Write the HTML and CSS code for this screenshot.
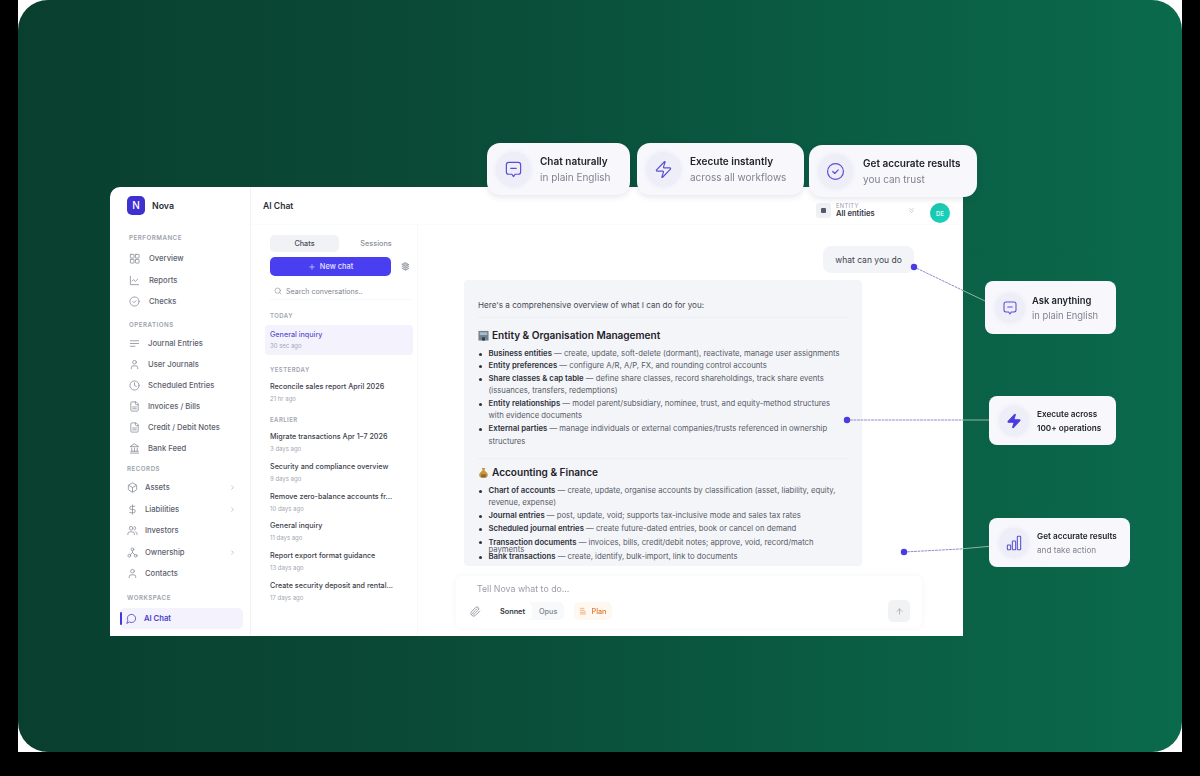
FILE: index.html
```html
<!DOCTYPE html>
<html lang="en">
<head>
<meta charset="utf-8">
<title>Nova AI Chat</title>
<link rel="stylesheet" href="styles.css">
</head>
<body>
<svg class="sprite" aria-hidden="true">
  <symbol id="i-grid" viewBox="0 0 24 24"><rect x="3" y="3" width="8" height="8" rx="1"/><rect x="14" y="3" width="8" height="8" rx="1"/><rect x="3" y="14" width="8" height="8" rx="1"/><rect x="14" y="14" width="8" height="8" rx="1"/></symbol>
  <symbol id="i-chart" viewBox="0 0 24 24"><path d="M3 3v18h18"/><path d="m19 9-5 5-4-4-3 3"/></symbol>
  <symbol id="i-check" viewBox="0 0 24 24"><circle cx="12" cy="12" r="10"/><path d="m8.500 12 2.500 2.500 4.500-4.500"/></symbol>
  <symbol id="i-lines" viewBox="0 0 24 24"><path d="M21 6H3"/><path d="M21 12H3"/><path d="M13 18H3"/></symbol>
  <symbol id="i-user" viewBox="0 0 24 24"><path d="M19 21v-2a4 4 0 0 0-4-4H9a4 4 0 0 0-4 4v2"/><circle cx="12" cy="7" r="4"/></symbol>
  <symbol id="i-clock" viewBox="0 0 24 24"><circle cx="12" cy="12" r="10"/><path d="M12 6v6l4 2"/></symbol>
  <symbol id="i-file" viewBox="0 0 24 24"><path d="M15 2H6a2 2 0 0 0-2 2v16a2 2 0 0 0 2 2h12a2 2 0 0 0 2-2V7Z"/><path d="M14 2v4a2 2 0 0 0 2 2h4"/><path d="M16 13H8"/><path d="M16 17H8"/></symbol>
  <symbol id="i-bank" viewBox="0 0 24 24"><path d="M3 22h18"/><path d="M6 18v-7"/><path d="M12 18v-7"/><path d="M18 18v-7"/><path d="M12 2l9 6H3z"/><path d="M4 18h16"/></symbol>
  <symbol id="i-box" viewBox="0 0 24 24"><path d="M21 8a2 2 0 0 0-1-1.730l-7-4a2 2 0 0 0-2 0l-7 4A2 2 0 0 0 3 8v8a2 2 0 0 0 1 1.730l7 4a2 2 0 0 0 2 0l7-4A2 2 0 0 0 21 16Z"/><path d="m3.300 7 8.700 5 8.700-5"/><path d="M12 22V12"/></symbol>
  <symbol id="i-dollar" viewBox="0 0 24 24"><path d="M12 2v20"/><path d="M17 5H9.500a3.500 3.500 0 0 0 0 7h5a3.500 3.500 0 0 1 0 7H6"/></symbol>
  <symbol id="i-users" viewBox="0 0 24 24"><path d="M16 21v-2a4 4 0 0 0-4-4H6a4 4 0 0 0-4 4v2"/><circle cx="9" cy="7" r="4"/><path d="M22 21v-2a4 4 0 0 0-3-3.870"/><path d="M16 3.130a4 4 0 0 1 0 7.750"/></symbol>
  <symbol id="i-net" viewBox="0 0 24 24"><circle cx="12" cy="5" r="3"/><circle cx="5" cy="19" r="3"/><circle cx="19" cy="19" r="3"/><path d="M12 8v4"/><path d="m12 12-5 5"/><path d="m12 12 5 5"/></symbol>
  <symbol id="i-bubble" viewBox="0 0 24 24"><path d="M7.900 20A9 9 0 1 0 4 16.100L2 22Z"/></symbol>
  <symbol id="i-msg" viewBox="0 0 24 24"><path d="M21 15a3 3 0 0 1-3 3h-4l-2 3-2-3H6a3 3 0 0 1-3-3V6a3 3 0 0 1 3-3h12a3 3 0 0 1 3 3z"/><path d="M8.500 10.500h7"/></symbol>
  <symbol id="i-zap" viewBox="0 0 24 24"><path d="M4 14a1 1 0 0 1-.78-1.630l9.900-10.200a.5.5 0 0 1 .86.46l-1.920 6.020A1 1 0 0 0 13 10h7a1 1 0 0 1 .78 1.630l-9.900 10.200a.5.5 0 0 1-.86-.46l1.920-6.020A1 1 0 0 0 11 14z"/></symbol>
  <symbol id="i-clip" viewBox="0 0 24 24"><path d="m21.440 11.050-9.190 9.190a6 6 0 0 1-8.490-8.490l8.570-8.570A4 4 0 1 1 18 8.840l-8.590 8.570a2 2 0 0 1-2.830-2.830l8.490-8.480"/></symbol>
  <symbol id="i-up" viewBox="0 0 24 24"><path d="m5 12 7-7 7 7"/><path d="M12 19V5"/></symbol>
  <symbol id="i-search" viewBox="0 0 24 24"><circle cx="11" cy="11" r="8"/><path d="m21 21-4.300-4.300"/></symbol>
  <symbol id="i-plus" viewBox="0 0 24 24"><path d="M5 12h14"/><path d="M12 5v14"/></symbol>
  <symbol id="i-right" viewBox="0 0 24 24"><path d="m9 18 6-6-6-6"/></symbol>
  <symbol id="i-down2" viewBox="0 0 24 24"><path d="m6 5 6 6 6-6"/><path d="m6 13 6 6 6-6"/></symbol>
  <symbol id="i-layers" viewBox="0 0 24 24"><path d="m12 2 9 5-9 5-9-5z"/><path d="m3 12 9 5 9-5"/><path d="m3 17 9 5 9-5"/></symbol>
  <symbol id="i-plan" viewBox="0 0 24 24"><path d="M4 4h11"/><path d="M4 10h8"/><path d="M4 16h14"/><path d="M4 21h16"/><path d="M14 10l4 3"/></symbol>
  <symbol id="i-bars" viewBox="0 0 24 24"><rect x="2" y="15" width="5" height="7" rx="1"/><rect x="9.500" y="9" width="5" height="13" rx="1"/><rect x="17" y="2" width="5" height="20" rx="1"/></symbol>
</svg>

<div class="stage">
  <main class="hero">
    <section class="app">
      <aside class="side">
        <div class="brand"><span class="logo">N</span><span class="brand-name">Nova</span></div>

        <div class="nav-group g1">
          <h4 class="nav-label">PERFORMANCE</h4>
          <a class="nav"><svg class="ic"><use href="#i-grid"/></svg>Overview</a>
          <a class="nav"><svg class="ic"><use href="#i-chart"/></svg>Reports</a>
          <a class="nav"><svg class="ic"><use href="#i-check"/></svg>Checks</a>
        </div>
        <div class="nav-group g2">
          <h4 class="nav-label">OPERATIONS</h4>
          <a class="nav"><svg class="ic"><use href="#i-lines"/></svg>Journal Entries</a>
          <a class="nav"><svg class="ic"><use href="#i-user"/></svg>User Journals</a>
          <a class="nav"><svg class="ic"><use href="#i-clock"/></svg>Scheduled Entries</a>
          <a class="nav"><svg class="ic"><use href="#i-file"/></svg>Invoices / Bills</a>
          <a class="nav"><svg class="ic"><use href="#i-file"/></svg>Credit / Debit Notes</a>
          <a class="nav"><svg class="ic"><use href="#i-bank"/></svg>Bank Feed</a>
        </div>
        <div class="nav-group g3">
          <h4 class="nav-label">RECORDS</h4>
          <a class="nav"><svg class="ic"><use href="#i-box"/></svg>Assets<svg class="chev"><use href="#i-right"/></svg></a>
          <a class="nav"><svg class="ic"><use href="#i-dollar"/></svg>Liabilities<svg class="chev"><use href="#i-right"/></svg></a>
          <a class="nav"><svg class="ic"><use href="#i-users"/></svg>Investors</a>
          <a class="nav"><svg class="ic"><use href="#i-net"/></svg>Ownership<svg class="chev"><use href="#i-right"/></svg></a>
          <a class="nav"><svg class="ic"><use href="#i-user"/></svg>Contacts</a>
        </div>
        <div class="nav-group g4">
          <h4 class="nav-label">WORKSPACE</h4>
          <a class="nav nav-active"><svg class="ic"><use href="#i-bubble"/></svg>AI Chat</a>
        </div>
      </aside>

      <div class="content">
        <header class="topbar">
          <h1 class="page-title">AI Chat</h1>
          <div class="entity">
            <span class="entity-ic"><span class="entity-dot"></span></span>
            <div class="entity-text"><span class="entity-label">ENTITY</span><span class="entity-val">All entities</span></div>
            <svg class="entity-chev"><use href="#i-down2"/></svg>
          </div>
          <span class="avatar">DE</span>
        </header>

        <div class="body">
          <aside class="chats">
            <div class="tabs"><span class="tab tab-on">Chats</span><span class="tab">Sessions</span></div>
            <div class="new-row">
              <button class="new-btn"><svg class="plus"><use href="#i-plus"/></svg>New chat</button>
              <svg class="layers"><use href="#i-layers"/></svg>
            </div>
            <div class="search"><svg class="search-ic"><use href="#i-search"/></svg>Search conversations..</div>

            <h5 class="chat-label l-today">TODAY</h5>
            <div class="chat chat-on"><span class="chat-title">General inquiry</span><span class="chat-time">30 sec ago</span></div>
            <h5 class="chat-label l-yest">YESTERDAY</h5>
            <div class="chat"><span class="chat-title">Reconcile sales report April 2026</span><span class="chat-time">21 hr ago</span></div>
            <h5 class="chat-label l-early">EARLIER</h5>
            <div class="chat"><span class="chat-title">Migrate transactions Apr 1–7 2026</span><span class="chat-time">3 days ago</span></div>
            <div class="chat"><span class="chat-title">Security and compliance overview</span><span class="chat-time">9 days ago</span></div>
            <div class="chat"><span class="chat-title">Remove zero-balance accounts fr...</span><span class="chat-time">10 days ago</span></div>
            <div class="chat"><span class="chat-title">General inquiry</span><span class="chat-time">11 days ago</span></div>
            <div class="chat"><span class="chat-title">Report export format guidance</span><span class="chat-time">13 days ago</span></div>
            <div class="chat"><span class="chat-title">Create security deposit and rental...</span><span class="chat-time">17 days ago</span></div>
          </aside>

          <section class="thread">
            <div class="bubble-row"><div class="bubble">what can you do</div></div>
            <article class="answer">
              <p class="intro">Here's a comprehensive overview of what I can do for you:</p>
              <h2 class="sec sec-first">
                <svg class="emoji" viewBox="0 0 12 12"><rect x="0.500" y="1" width="11" height="10.500" fill="#6f8290"/><rect x="2" y="2.500" width="8" height="3" fill="#a9bcc8"/><rect x="4.500" y="8" width="3" height="3.500" fill="#2d3a42"/></svg>
                Entity &amp; Organisation Management</h2>
              <ul class="list list-first">
                <li><b>Business entities</b> — create, update, soft-delete (dormant), reactivate, manage user assignments</li>
                <li><b>Entity preferences</b> — configure A/R, A/P, FX, and rounding control accounts</li>
                <li><b>Share classes &amp; cap table</b> — define share classes, record shareholdings, track share events (issuances, transfers, redemptions)</li>
                <li><b>Entity relationships</b> — model parent/subsidiary, nominee, trust, and equity-method structures with evidence documents</li>
                <li><b>External parties</b> — manage individuals or external companies/trusts referenced in ownership structures</li>
              </ul>
              <h2 class="sec sec-second">
                <svg class="emoji" viewBox="0 0 12 12"><path d="M4 1h4L7 3.500l3 3c1.500 2 .5 5-1.500 5h-5C1.500 11.500.5 8.500 2 6.500l3-3z" fill="#c9973f"/><rect x="3.500" y="8" width="5" height="3.500" fill="#8a6a2e"/></svg>
                Accounting &amp; Finance</h2>
              <ul class="list">
                <li><b>Chart of accounts</b> — create, update, organise accounts by classification (asset, liability, equity, revenue, expense)</li>
                <li><b>Journal entries</b> — post, update, void; supports tax-inclusive mode and sales tax rates</li>
                <li><b>Scheduled journal entries</b> — create future-dated entries, book or cancel on demand</li>
                <li class="tight"><b>Transaction documents</b> — invoices, bills, credit/debit notes; approve, void, record/match payments</li>
                <li><b>Bank transactions</b> — create, identify, bulk-import, link to documents</li>
              </ul>
            </article>
            <div class="composer">
              <div class="placeholder">Tell Nova what to do...</div>
              <div class="tools">
                <svg class="clip"><use href="#i-clip"/></svg>
                <div class="models"><span class="model model-on">Sonnet</span><span class="model">Opus</span></div>
                <span class="plan"><svg class="plan-ic"><use href="#i-plan"/></svg>Plan</span>
                <span class="send"><svg class="send-ic"><use href="#i-up"/></svg></span>
              </div>
            </div>
          </section>
        </div>
      </div>
    </section>

    <svg class="wires" viewBox="0 0 1164 752" aria-hidden="true">
      <path class="wire" d="M896 267 L945 290.500"/>
      <path class="wire wire-out" d="M945 290.500 L967 301"/>
      <path class="wire" d="M829 420 L945 420"/>
      <path class="wire wire-out" d="M945 420 L971 420"/>
      <path class="wire" d="M886 552 L942 549 L945 548.700"/>
      <path class="wire wire-out" d="M945 548.700 L975 546"/>
      <circle class="wire-dot" cx="896" cy="267" r="3.200"/>
      <circle class="wire-dot" cx="829" cy="420" r="3.200"/>
      <circle class="wire-dot" cx="886" cy="552" r="3.200"/>
    </svg>

    <div class="card pill p1"><span class="disc"><svg class="disc-ic"><use href="#i-msg"/></svg></span><div><strong>Chat naturally</strong><em>in plain English</em></div></div>
    <div class="card pill p2"><span class="disc"><svg class="disc-ic"><use href="#i-zap"/></svg></span><div><strong>Execute instantly</strong><em>across all workflows</em></div></div>
    <div class="card pill p3"><span class="disc"><svg class="disc-ic"><use href="#i-check"/></svg></span><div><strong>Get accurate results</strong><em>you can trust</em></div></div>

    <div class="card note n1"><span class="disc"><svg class="disc-ic"><use href="#i-msg"/></svg></span><div><strong>Ask anything</strong><em>in plain English</em></div></div>
    <div class="card note small n2"><span class="disc"><svg class="disc-ic solid"><use href="#i-zap"/></svg></span><div><strong>Execute across</strong><strong>100+ operations</strong></div></div>
    <div class="card note small n3"><span class="disc"><svg class="disc-ic"><use href="#i-bars"/></svg></span><div><strong>Get accurate results</strong><em>and take action</em></div></div>
  </main>
</div>
</body>
</html>
```

FILE: styles.css
```css
* { box-sizing: border-box; }
html, body { margin: 0; height: 776px; overflow: hidden; background: #000; }
body { font-family: Inter, "Noto Sans", sans-serif; color: #2b2f38; }
.sprite { display: none; }
svg { fill: none; stroke: currentColor; stroke-width: 1.6; stroke-linecap: round; stroke-linejoin: round; flex: none; }

.stage { width: 1164px; height: 752px; margin-left: 18px; background: #fff; }
.hero {
  position: relative; width: 100%; height: 100%;
  padding: 187px 0 0 92px;
  border-radius: 30px;
  background: linear-gradient(90deg, #093f2f 0%, #0a4a36 35%, #0a5c42 70%, #0b6a4c 100%);
  overflow: hidden;
}

.app {
  display: grid; grid-template-columns: 141px 1fr;
  width: 853px; height: 449px;
  background: #fff; border-radius: 10px 0 0 0;
  filter: blur(.3px);
}

/* sidebar */
.side { border-right: 1px solid #f2f3f6; display: flex; flex-direction: column; }
.brand { display: flex; align-items: center; gap: 7px; height: 36px; margin-bottom: 2px; padding: 0 0 0 17px; }
.logo {
  width: 18px; height: 19px; border-radius: 5px; background: #3f30d0; color: #fff;
  display: flex; align-items: center; justify-content: center; font-size: 10px; font-weight: 500;
}
.brand-name { font-size: 8.800px; font-weight: 600; color: #2a2d36; }
.nav-group { display: flex; flex-direction: column; }
.nav-label { margin: 0; font-size: 6.200px; line-height: 10px; font-weight: 600; letter-spacing: .5px; color: #9ca1ad; }
.nav { display: flex; align-items: center; height: 21.300px; font-size: 7.650px; font-weight: 500; color: #5c616e; position: relative; }
.ic { width: 11px; height: 11px; margin-right: 7px; color: #8b909c; stroke-width: 1.800; }
.chev { width: 7px; height: 7px; position: absolute; right: 14px; color: #9ca1ad; stroke-width: 2; }
.g1 { padding: 8px 0 0 19px; }
.g1 .nav-label { margin-bottom: 5px; }
.g1 .nav { gap: 2px; height: 21.500px; }
.g2 { padding: 7px 0 0 19px; }
.g2 .nav-label { margin-bottom: 4px; }
.g2 .nav { height: 20.900px; gap: 1px; }
.g3 { padding: 5px 0 0 17px; }
.g3 .nav-label { margin-bottom: 3px; }
.g3 .nav { height: 21.500px; gap: 0; }
.g4 { padding: 9px 0 0 17px; }
.g4 .nav-label { margin-bottom: 5px; }
.nav-active {
  width: 123px; height: 21px; margin-left: -7px; padding-left: 6px; gap: 0;
  background: #f3f2fd; border-radius: 5px; color: #4a3fc9; font-weight: 600;
}
.nav-active .ic { color: #4f46c9; margin-right: 7px; }
.nav-active::before { content: ""; position: absolute; left: 0; top: 4px; width: 2px; height: 13px; background: #4338e0; border-radius: 1px; }

/* header */
.content { display: flex; flex-direction: column; min-width: 0; }
.topbar { height: 38px; display: flex; align-items: center; padding: 0 13px 0 12px; border-bottom: 1px solid #fafbfc; }
.page-title { margin: 0 auto 0 0; font-size: 8.600px; font-weight: 600; color: #2a2d36; }
.entity { display: flex; align-items: center; width: 99px; height: 20px; margin-top: 10px; }
.entity-ic { width: 15px; height: 15px; border-radius: 3px; background: #eef0f4; display: flex; align-items: center; justify-content: center; margin-right: 5px; }
.entity-dot { width: 5px; height: 5px; background: #555a68; border-radius: 1px; }
.entity-text { display: flex; flex-direction: column; flex: 1; }
.entity-label { font-size: 5.800px; line-height: 7px; letter-spacing: .3px; color: #9ca1ad; }
.entity-val { font-size: 7.600px; line-height: 10px; font-weight: 600; color: #333742; }
.entity-chev { width: 7px; height: 7px; margin-right: 0; color: #8f94a0; }
.avatar {
  width: 20px; height: 20px; border-radius: 50%; margin: 15px 0 0 15px;
  background: linear-gradient(135deg, #19c2a8, #18d5c0); color: #d8fbf5;
  font-size: 6px; font-weight: 600; display: flex; align-items: center; justify-content: center;
}

.body { flex: 1; display: grid; grid-template-columns: 167px 1fr; min-height: 0; }

/* chat list */
.chats { border-right: 1px solid #f7f8fa; padding: 10px 5px 0 19px; display: flex; flex-direction: column; }
.tabs { display: grid; grid-template-columns: 69px 74px; height: 17px; }
.tab { display: flex; align-items: center; justify-content: center; font-size: 7.300px; font-weight: 500; color: #8c919d; border-radius: 5px; }
.tab-on { background: #f1f2f5; color: #484c57; }
.new-row { display: flex; align-items: center; margin-top: 5px; }
.new-btn {
  width: 121px; height: 19px; border: 0; border-radius: 5px; background: #4a3ff0; color: #e4e2ff;
  font: 500 7.400px Inter, sans-serif; display: flex; align-items: center; justify-content: center; gap: 4px;
}
.plus { width: 8px; height: 8px; color: #fff; }
.layers { width: 9px; height: 9px; margin-left: 10px; color: #666b78; fill: #bfc3cc; }
.search { display: flex; align-items: center; gap: 4px; height: 17px; margin: 7px 0 0 0; padding-left: 4px; font-size: 7.100px; color: #7f8490; border-bottom: 1px solid #f8f9fa; width: 143px; }
.search-ic { width: 8px; height: 8px; color: #777c88; }
.chat-label { margin: 0; font-size: 6px; line-height: 10px; font-weight: 600; letter-spacing: .45px; color: #a0a5b0; }
.l-today { margin-top: 11px; }
.l-yest { margin-top: 10px; }
.l-early { margin-top: 11px; }
.chat { display: flex; flex-direction: column; height: 29.700px; padding-top: 6px; width: 143px; }
.chat-title { font-size: 7.200px; line-height: 11px; font-weight: 500; color: #3c404b; white-space: nowrap; }
.chat-time { font-size: 6px; line-height: 9px; margin-top: 2px; color: #a3a7b1; }
.chat-on {
  background: #f4f3fd; border-radius: 4px; width: 148px; margin: 4px 0 0 -5px; padding: 4px 0 0 5px;
}
.chat-on .chat-title { color: #5b4fd0; }
.chat-on .chat-time { margin-top: 1px; }

/* thread */
.thread { display: flex; flex-direction: column; background: #fff; min-width: 0; }
.bubble-row { display: flex; justify-content: flex-end; padding: 21px 49px 0 0; }
.bubble { width: 91px; height: 27px; border-radius: 8px; background: #f3f4f7; font-size: 8.500px; line-height: 28px; text-align: center; color: #3e424d; }
.answer { width: 398px; height: 286px; margin: 7px 0 0 46px; background: #f4f5f9; border-radius: 4px; padding: 20px 14px 0; overflow: hidden; font-size: 7.720px; color: #555a66; }
.intro { margin: 0 0 11px; padding-bottom: 7px; line-height: 10px; border-bottom: 1px solid #eceef2; font-size: 8.150px; color: #444853; }
.sec { margin: 0; display: flex; align-items: center; gap: 3px; font-size: 10.050px; line-height: 13px; font-weight: 600; color: #1f222a; }
.emoji { width: 11px; height: 11px; stroke: none; }
.sec-first { margin-bottom: 5.500px; }
.sec-second { margin-top: 7px; margin-bottom: 6px; }
.list { margin: 0; padding: 0 0 0 10.500px; list-style: none; }
.list li { position: relative; line-height: 12.600px; padding-right: 6px; }
.list li::before { content: ""; position: absolute; left: -10px; top: 5px; width: 3px; height: 3px; border-radius: 50%; background: #2f333d; }
.list b { font-weight: 600; color: #2c3039; }
.list-first { padding-bottom: 9.500px; border-bottom: 1px solid #eceef2; }
.list li.tight { line-height: 7px; margin: 3.400px 0 -1.800px; }
.list li.tight::before { top: 2px; }

/* composer */
.composer { width: 466px; height: 52px; margin: 10px 0 0 38px; background: #fff; border-radius: 6px; box-shadow: 0 0 6px rgba(40, 50, 80, .05); padding: 7px 12px 0 13px; }
.placeholder { font-size: 8.800px; line-height: 11px; color: #9a9ea9; padding-left: 8px; }
.tools { display: flex; align-items: center; margin-top: 6px; height: 22px; }
.clip { width: 11px; height: 11px; margin-left: 1px; color: #7a7f8b; }
.models { display: flex; margin-left: 12px; height: 18px; background: #f8f9fb; border-radius: 5px; }
.model { display: flex; align-items: center; padding: 0 7px; font-size: 7.300px; font-weight: 500; color: #7d828e; }
.model-on { background: #fff; border-radius: 5px; font-weight: 600; color: #30343e; }
.plan { display: flex; align-items: center; gap: 4px; height: 18px; margin-left: 10px; padding: 0 5px; background: #fff8f1; border-radius: 5px; font-size: 7.300px; font-weight: 500; color: #e07a35; }
.plan-ic { width: 8px; height: 8px; }
.send { width: 22px; height: 22px; margin-left: auto; border-radius: 5px; background: #f1f2f4; display: flex; align-items: center; justify-content: center; }
.send-ic { width: 9px; height: 9px; color: #8d919c; }

/* overlays */
.wires { position: absolute; inset: 0; width: 1164px; height: 752px; pointer-events: none; }
.wire { stroke: #8f8bd0; stroke-width: 1; stroke-dasharray: 2 1.500; }
.wire-out { stroke: #8fb3a6; stroke-dasharray: none; }
.wire-dot { fill: #4a3be0; stroke: none; }

.card {
  position: absolute; display: flex; align-items: center;
  background: #f7f7fc; filter: blur(.3px);
}
.card strong { display: block; font-weight: 600; color: #22252d; }
.card em { display: block; font-style: normal; color: #80848f; }
.disc { flex: none; display: flex; align-items: center; justify-content: center; border-radius: 50%; background: #eeeef9; box-shadow: 0 0 5px rgba(90, 90, 190, .08); color: #5a50cf; }
.pill { height: 52px; border-radius: 13px; padding-left: 9px; box-shadow: 0 2px 6px rgba(40, 50, 80, .12); }
.pill .disc { width: 35px; height: 35px; margin-right: 9px; }
.pill .disc-ic { width: 19px; height: 19px; stroke-width: 1.500; }
.pill strong { font-size: 10px; line-height: 16px; }
.pill em { font-size: 10px; line-height: 16px; }
.p1 { left: 469px; top: 143px; width: 143px; }
.p2 { left: 619px; top: 143px; width: 167px; padding-left: 9px; z-index: 1; }
.p2 .disc { margin-right: 9px; }
.p3 { left: 791px; top: 145px; width: 168px; z-index: 2; }
.p3 .disc { margin-right: 10px; }

.note { border-radius: 8px; }
.note .disc { width: 30px; height: 30px; }
.note .disc-ic { width: 16px; height: 16px; }
.note strong, .note em { font-size: 9.400px; line-height: 15px; }
.n1 { left: 967px; top: 281px; width: 131px; height: 53px; padding-left: 10px; }
.n1 .disc { margin-right: 7px; }
.small .disc { margin-right: 8px; }
.small strong, .small em { font-size: 8.200px; line-height: 14px; }
.n2 { left: 971px; top: 396px; width: 127px; height: 49px; padding-left: 10px; }
.solid { fill: #4a3be0; stroke: #4a3be0; }
.n3 { left: 971px; top: 518px; width: 141px; height: 49px; padding-left: 10px; }
```
